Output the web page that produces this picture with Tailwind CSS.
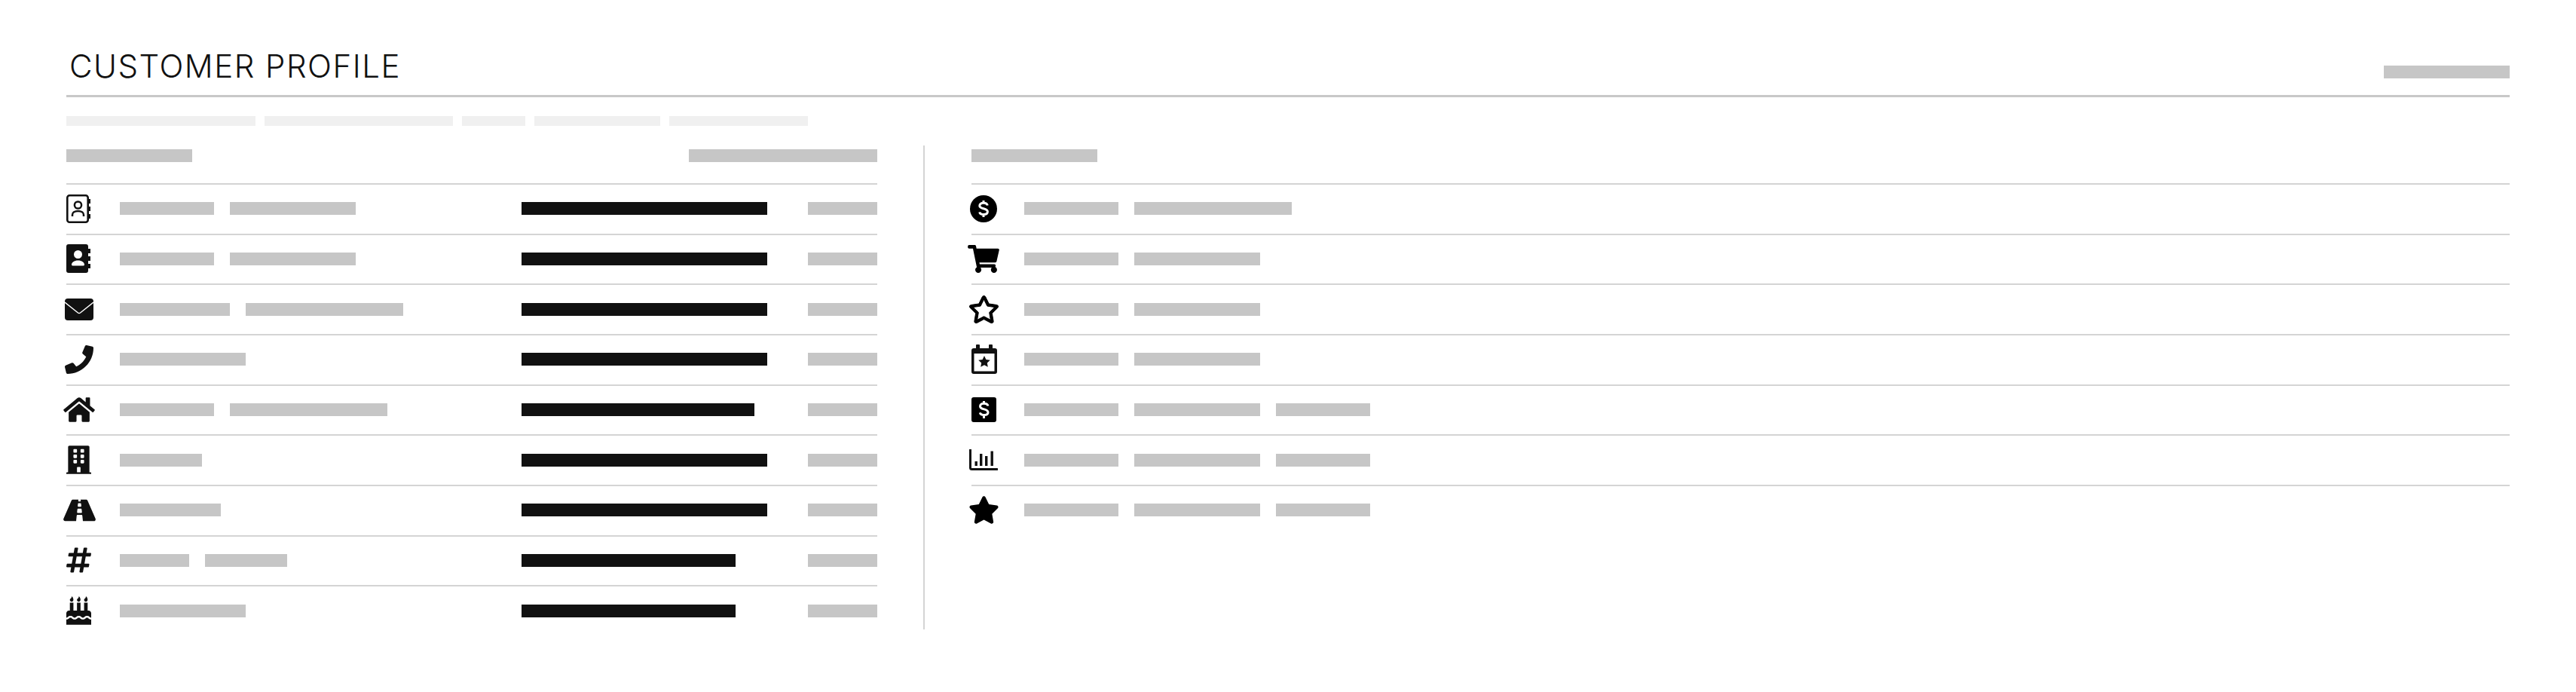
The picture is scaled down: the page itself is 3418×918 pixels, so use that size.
<!DOCTYPE html>
<html lang="en">
<head>
    <meta charset="UTF-8">
    <meta name="viewport" content="width=device-width, initial-scale=1.0">
    <title>Customer Profile</title>
    <script src="https://cdn.jsdelivr.net/npm/@tailwindcss/browser@4"></script>
</head>
<body class="bg-white">
    <div class="w-[3418px] h-[918px] px-[88px] font-['Inter',sans-serif] overflow-hidden">
        <!-- Header -->
        <div class="h-[129px] flex items-start justify-between border-b-[3px] border-[#c8c8c8]">
            <h1 class="ml-[4px] mt-[64px] text-[42px] leading-[48px] font-light text-[#111] tracking-[1.5px]">CUSTOMER PROFILE</h1>
            <div class="mt-[87px] w-[167px] h-[17px] bg-[#c6c6c6]"></div>
        </div>

        <!-- Tabs -->
        <div class="mt-[25px] flex gap-[12px]">
            <div class="w-[251px] h-[13px] bg-[#f0f0f0]"></div>
            <div class="w-[250px] h-[13px] bg-[#f0f0f0]"></div>
            <div class="w-[84px] h-[13px] bg-[#f0f0f0]"></div>
            <div class="w-[167px] h-[13px] bg-[#f0f0f0]"></div>
            <div class="w-[184px] h-[13px] bg-[#f0f0f0]"></div>
        </div>

        <div class="mt-[26px] flex">
            <!-- Left column -->
            <div class="w-[1076px]">
                <div class="h-[50px] pt-[5px] flex items-start justify-between">
                    <div class="w-[167px] h-[17px] bg-[#c6c6c6]"></div>
                    <div class="w-[250px] h-[17px] bg-[#c6c6c6]"></div>
                </div>
                <div class="h-[66.67px] pb-[1px] flex items-center border-t-2 border-[#d4d4d4]">
                    <div class="w-[71px] shrink-0">
                        <svg class="w-[33px] h-[38px]" viewBox="0 0 33 38"><rect x="1.300" y="1.300" width="27.400" height="35.400" rx="3" fill="none" stroke="#111" stroke-width="2.600"/><path d="M29 6h3v6h-3zM29 16h3v6h-3zM29 26h3v6h-3z" fill="#111"/><circle cx="15.500" cy="14" r="4.600" fill="none" stroke="#111" stroke-width="2.500"/><path d="M8 29v-2c0-3 3-5 7.500-5s7.500 2 7.500 5v2" fill="none" stroke="#111" stroke-width="2.500"/></svg>
                    </div>
                    <div class="w-[533px] flex gap-[21px]"><div class="w-[125px] h-[17px] bg-[#c6c6c6]"></div><div class="w-[167px] h-[17px] bg-[#c6c6c6]"></div></div>
                    <div class="w-[380px]"><div class="w-[326px] h-[17px] bg-[#111]"></div></div>
                    <div class="w-[92px] h-[17px] bg-[#c6c6c6]"></div>
                </div>
                <div class="h-[66.67px] pb-[1px] flex items-center border-t-2 border-[#d4d4d4]">
                    <div class="w-[71px] shrink-0">
                        <svg class="w-[33px] h-[38px]" viewBox="0 0 33 38"><path fill-rule="evenodd" d="M3 0h23a3 3 0 0 1 3 3v32a3 3 0 0 1-3 3H3a3 3 0 0 1-3-3V3a3 3 0 0 1 3-3zM15.500 8a5.500 5.500 0 1 0 0 11 5.500 5.500 0 0 0 0-11zM7 27c0 1.500 1 1.500 2 1.500h13c1 0 2 0 2-1.500 0-3-3.500-5.500-8.500-5.500S7 24 7 27z" fill="#111"/><path d="M29 6h3v6h-3zM29 16h3v6h-3zM29 26h3v6h-3z" fill="#111"/></svg>
                    </div>
                    <div class="w-[533px] flex gap-[21px]"><div class="w-[125px] h-[17px] bg-[#c6c6c6]"></div><div class="w-[167px] h-[17px] bg-[#c6c6c6]"></div></div>
                    <div class="w-[380px]"><div class="w-[326px] h-[17px] bg-[#111]"></div></div>
                    <div class="w-[92px] h-[17px] bg-[#c6c6c6]"></div>
                </div>
                <div class="h-[66.67px] pb-[1px] flex items-center border-t-2 border-[#d4d4d4]">
                    <div class="w-[71px] shrink-0 -ml-[2px] mr-[2px]">
                        <svg class="w-[38px] h-[29px]" viewBox="0 0 38 29"><rect width="38" height="29" rx="4" fill="#111"/><path d="M0 5l17.500 14q1.500 1 3 0L38 5" fill="none" stroke="#fff" stroke-width="1.500"/></svg>
                    </div>
                    <div class="w-[533px] flex gap-[21px]"><div class="w-[146px] h-[17px] bg-[#c6c6c6]"></div><div class="w-[209px] h-[17px] bg-[#c6c6c6]"></div></div>
                    <div class="w-[380px]"><div class="w-[326px] h-[17px] bg-[#111]"></div></div>
                    <div class="w-[92px] h-[17px] bg-[#c6c6c6]"></div>
                </div>
                <div class="h-[66.67px] pb-[1px] flex items-center border-t-2 border-[#d4d4d4]">
                    <div class="w-[71px] shrink-0 -ml-[2px] mr-[2px]">
                        <svg class="w-[38px] h-[38px]" viewBox="0 0 512 512"><path fill="#111" d="M493.4 24.6l-104-24c-11.3-2.6-22.9 3.3-27.500 13.900l-48 112c-4.200 9.800-1.400 21.300 6.900 28l60.600 49.600c-36 76.700-98.900 140.500-177.200 177.200l-49.600-60.600c-6.800-8.300-18.200-11.100-28-6.900l-112 48C3.900 366.500-2 378.100.6 389.400l24 104C27.100 504.200 36.700 512 48 512c256.100 0 464-207.500 464-464 0-11.200-7.700-20.900-18.600-23.400z"/></svg>
                    </div>
                    <div class="w-[533px] flex gap-[21px]"><div class="w-[167px] h-[17px] bg-[#c6c6c6]"></div></div>
                    <div class="w-[380px]"><div class="w-[326px] h-[17px] bg-[#111]"></div></div>
                    <div class="w-[92px] h-[17px] bg-[#c6c6c6]"></div>
                </div>
                <div class="h-[66.67px] pb-[1px] flex items-center border-t-2 border-[#d4d4d4]">
                    <div class="w-[71px] shrink-0 -ml-[4px] mr-[4px]">
                        <svg class="w-[42px] h-[37px]" viewBox="0 0 576 512"><path fill="#111" d="M280.37 148.26L96 300.11V464a16 16 0 0 0 16 16l112.060-.29a16 16 0 0 0 15.920-16V368a16 16 0 0 1 16-16h64a16 16 0 0 1 16 16v95.640a16 16 0 0 0 16 16.050L464 480a16 16 0 0 0 16-16V300L295.670 148.260a12.190 12.190 0 0 0-15.300 0zM571.600 251.470L488 182.560V44.050a12 12 0 0 0-12-12h-56a12 12 0 0 0-12 12v72.610L318.470 43a48 48 0 0 0-61 0L4.340 251.470a12 12 0 0 0-1.600 16.900l25.500 31A12 12 0 0 0 45.150 301l235.220-193.740a12.190 12.190 0 0 1 15.300 0L530.900 301a12 12 0 0 0 16.900-1.600l25.500-31a12 12 0 0 0-1.700-16.930z"/></svg>
                    </div>
                    <div class="w-[533px] flex gap-[21px]"><div class="w-[125px] h-[17px] bg-[#c6c6c6]"></div><div class="w-[209px] h-[17px] bg-[#c6c6c6]"></div></div>
                    <div class="w-[380px]"><div class="w-[309px] h-[17px] bg-[#111]"></div></div>
                    <div class="w-[92px] h-[17px] bg-[#c6c6c6]"></div>
                </div>
                <div class="h-[66.67px] pb-[1px] flex items-center border-t-2 border-[#d4d4d4]">
                    <div class="w-[71px] shrink-0">
                        <svg class="w-[33px] h-[38px]" viewBox="0 0 448 512"><path fill="#111" d="M436 480h-20V24c0-13.255-10.745-24-24-24H56C42.745 0 32 10.745 32 24v456H12c-6.627 0-12 5.373-12 12v20h448v-20c0-6.627-5.373-12-12-12zM128 76c0-6.627 5.373-12 12-12h40c6.627 0 12 5.373 12 12v40c0 6.627-5.373 12-12 12h-40c-6.627 0-12-5.373-12-12V76zm0 96c0-6.627 5.373-12 12-12h40c6.627 0 12 5.373 12 12v40c0 6.627-5.373 12-12 12h-40c-6.627 0-12-5.373-12-12v-40zm52 148h-40c-6.627 0-12-5.373-12-12v-40c0-6.627 5.373-12 12-12h40c6.627 0 12 5.373 12 12v40c0 6.627-5.373 12-12 12zm76 160h-64v-84c0-6.627 5.373-12 12-12h40c6.627 0 12 5.373 12 12v84zm64-172c0 6.627-5.373 12-12 12h-40c-6.627 0-12-5.373-12-12v-40c0-6.627 5.373-12 12-12h40c6.627 0 12 5.373 12 12v40zm0-96c0 6.627-5.373 12-12 12h-40c-6.627 0-12-5.373-12-12v-40c0-6.627 5.373-12 12-12h40c6.627 0 12 5.373 12 12v40zm0-96c0 6.627-5.373 12-12 12h-40c-6.627 0-12-5.373-12-12V76c0-6.627 5.373-12 12-12h40c6.627 0 12 5.373 12 12v40z"/></svg>
                    </div>
                    <div class="w-[533px] flex gap-[21px]"><div class="w-[109px] h-[17px] bg-[#c6c6c6]"></div></div>
                    <div class="w-[380px]"><div class="w-[326px] h-[17px] bg-[#111]"></div></div>
                    <div class="w-[92px] h-[17px] bg-[#c6c6c6]"></div>
                </div>
                <div class="h-[66.67px] pb-[1px] flex items-center border-t-2 border-[#d4d4d4]">
                    <div class="w-[71px] shrink-0 -ml-[4px] mr-[4px]">
                        <svg class="w-[43px] h-[38px]" viewBox="0 0 576 512"><path fill="#111" d="M573.19 402.67l-139.790-320C428.430 71.290 417.600 64 405.680 64h-97.590l2.450 23.160c.5 4.720-3.210 8.840-7.960 8.840h-29.160c-4.750 0-8.460-4.120-7.960-8.840L267.910 64h-97.590c-11.930 0-22.760 7.290-27.730 18.670L2.800 402.670C-6.450 423.860 8.310 448 30.540 448h196.840l10.310-97.680c.86-8.140 7.720-14.320 15.910-14.320h68.800c8.190 0 15.050 6.180 15.910 14.320L348.620 448h196.840c22.230 0 36.990-24.140 27.730-45.330zM260.400 135.160a8 8 0 0 1 7.960-7.160h39.290c4.090 0 7.530 3.090 7.960 7.160l4.600 43.580c.75 7.090-4.810 13.260-11.930 13.260h-40.540c-7.130 0-12.680-6.170-11.930-13.260l4.600-43.580zM315.640 304h-55.290c-9.500 0-16.910-8.230-15.910-17.680l5.070-48c.86-8.140 7.720-14.320 15.910-14.320h45.150c8.190 0 15.050 6.180 15.910 14.320l5.070 48c1 9.450-6.410 17.680-15.910 17.680z"/></svg>
                    </div>
                    <div class="w-[533px] flex gap-[21px]"><div class="w-[134px] h-[17px] bg-[#c6c6c6]"></div></div>
                    <div class="w-[380px]"><div class="w-[326px] h-[17px] bg-[#111]"></div></div>
                    <div class="w-[92px] h-[17px] bg-[#c6c6c6]"></div>
                </div>
                <div class="h-[66.67px] pb-[1px] flex items-center border-t-2 border-[#d4d4d4]">
                    <div class="w-[71px] shrink-0">
                        <svg class="w-[33px] h-[38px]" viewBox="0 0 448 512"><path fill="#111" d="M440.667 182.109l7.143-40c1.313-7.355-4.342-14.109-11.813-14.109h-74.810l14.623-81.891C377.123 38.754 371.468 32 363.997 32h-40.632a12 12 0 0 0-11.813 9.891L296.175 128H197.540l14.623-81.891C213.477 38.754 207.822 32 200.350 32h-40.632a12 12 0 0 0-11.813 9.891L132.528 128H53.432a12 12 0 0 0-11.813 9.891l-7.143 40C33.163 185.246 38.818 192 46.289 192h74.810L98.242 320H19.146a12 12 0 0 0-11.813 9.891l-7.143 40C-1.123 377.246 4.532 384 12.003 384h74.810L72.190 465.891C70.877 473.246 76.532 480 84.003 480h40.632a12 12 0 0 0 11.813-9.891L151.826 384h98.634l-14.623 81.891C234.523 473.246 240.178 480 247.650 480h40.632a12 12 0 0 0 11.813-9.891L315.472 384h79.096a12 12 0 0 0 11.813-9.891l7.143-40c1.313-7.355-4.342-14.109-11.813-14.109h-74.810l22.857-128h79.096a12 12 0 0 0 11.813-9.891zM261.889 320h-98.634l22.857-128h98.634l-22.857 128z"/></svg>
                    </div>
                    <div class="w-[533px] flex gap-[21px]"><div class="w-[92px] h-[17px] bg-[#c6c6c6]"></div><div class="w-[109px] h-[17px] bg-[#c6c6c6]"></div></div>
                    <div class="w-[380px]"><div class="w-[284px] h-[17px] bg-[#111]"></div></div>
                    <div class="w-[92px] h-[17px] bg-[#c6c6c6]"></div>
                </div>
                <div class="h-[66.67px] pb-[1px] flex items-center border-t-2 border-[#d4d4d4]">
                    <div class="w-[71px] shrink-0">
                        <svg class="w-[33px] h-[38px]" viewBox="0 0 448 512"><path fill="#111" d="M448 384c-28.020 0-31.260-32-74.500-32-43.430 0-46.825 32-74.750 32-27.695 0-31.454-32-74.750-32-42.842 0-47.218 32-74.500 32-28.148 0-31.202-32-74.750-32-43.547 0-46.653 32-74.750 32v-80c0-26.500 21.500-48 48-48h16V112h64v144h64V112h64v144h64V112h64v144h16c26.500 0 48 21.500 48 48v80zm0 128H0v-96c43.356 0 46.767-32 74.750-32 27.951 0 31.253 32 74.750 32 42.843 0 47.217-32 74.500-32 28.148 0 31.201 32 74.750 32 43.357 0 46.767-32 74.750-32 27.488 0 31.252 32 74.500 32v96zM96 96c-17.750 0-32-14.250-32-32 0-31 32-23 32-64 12 0 32 29.500 32 56s-14.250 40-32 40zm128 0c-17.750 0-32-14.250-32-32 0-31 32-23 32-64 12 0 32 29.500 32 56s-14.250 40-32 40zm128 0c-17.750 0-32-14.250-32-32 0-31 32-23 32-64 12 0 32 29.500 32 56s-14.250 40-32 40z"/></svg>
                    </div>
                    <div class="w-[533px] flex gap-[21px]"><div class="w-[167px] h-[17px] bg-[#c6c6c6]"></div></div>
                    <div class="w-[380px]"><div class="w-[284px] h-[17px] bg-[#111]"></div></div>
                    <div class="w-[92px] h-[17px] bg-[#c6c6c6]"></div>
                </div>
            </div>

            <!-- Divider -->
            <div class="ml-[61px] mr-[62px] w-[2px] h-[642px] bg-[#d4d4d4]"></div>

            <!-- Right column -->
            <div class="flex-1">
                <div class="h-[50px] pt-[5px]"><div class="w-[167px] h-[17px] bg-[#c6c6c6]"></div></div>
                <div class="h-[66.67px] pb-[1px] flex items-center gap-[21px] border-t-2 border-[#d4d4d4]">
                    <div class="w-[49px] -ml-[2px] mr-[2px] shrink-0">
                        <svg class="w-[36px] h-[36px]" viewBox="0 0 36 36"><circle cx="18" cy="18" r="18" fill="#000"/><path d="M23.300 13.500c-.5-2-2.500-3.200-5.300-3.200-3.200 0-5.200 1.500-5.200 3.700 0 4.800 10.600 2.800 10.600 7.800 0 2.200-2 3.700-5.400 3.700-2.800 0-4.800-1.200-5.300-3.200M18 7v3.500M18 25.500V29" fill="none" stroke="#fff" stroke-width="3"/></svg>
                    </div>
                    <div class="w-[125px] h-[17px] bg-[#c6c6c6]"></div><div class="w-[209px] h-[17px] bg-[#c6c6c6]"></div>
                </div>
                <div class="h-[66.67px] pb-[1px] flex items-center gap-[21px] border-t-2 border-[#d4d4d4]">
                    <div class="w-[49px] -ml-[5px] mr-[5px] shrink-0">
                        <svg class="w-[42px] h-[37px]" viewBox="0 0 576 512"><path fill="#000" d="M528.120 301.319l47.273-208C578.806 78.301 567.391 64 551.990 64H159.208l-9.166-44.810C147.758 8.021 137.930 0 126.529 0H24C10.745 0 0 10.745 0 24v16c0 13.255 10.745 24 24 24h69.883l70.248 343.435C147.325 417.100 136 435.222 136 456c0 30.928 25.072 56 56 56s56-25.072 56-56c0-15.674-6.447-29.835-16.824-40h209.647C430.447 426.165 424 440.326 424 456c0 30.928 25.072 56 56 56s56-25.072 56-56c0-22.172-12.888-41.332-31.579-50.405l5.517-24.276c3.413-15.018-8.002-29.319-23.403-29.319H218.117l-6.545-32h293.145c11.206 0 20.920-7.754 23.403-18.681z"/></svg>
                    </div>
                    <div class="w-[125px] h-[17px] bg-[#c6c6c6]"></div><div class="w-[167px] h-[17px] bg-[#c6c6c6]"></div>
                </div>
                <div class="h-[66.67px] pb-[1px] flex items-center gap-[21px] border-t-2 border-[#d4d4d4]">
                    <div class="w-[49px] -ml-[4px] mr-[4px] shrink-0">
                        <svg class="w-[41px] h-[37px]" viewBox="0 0 576 512"><path fill="#000" stroke="#000" stroke-width="14" d="M528.100 171.500L382 150.200 316.700 17.800c-11.700-23.600-45.600-23.900-57.400 0L194 150.200 47.900 171.500c-26.200 3.800-36.700 36.100-17.700 54.600l105.700 103-25 145.500c-4.500 26.300 23.200 46 46.400 33.700L288 439.600l130.700 68.700c23.200 12.200 50.900-7.400 46.400-33.700l-25-145.500 105.700-103c19-18.500 8.500-50.800-17.700-54.600zM388.600 312.300l23.700 138.400L288 385.400l-124.300 65.300 23.700-138.400-100.600-98 139-20.200 62.200-126 62.200 126 139 20.200-100.600 98z"/></svg>
                    </div>
                    <div class="w-[125px] h-[17px] bg-[#c6c6c6]"></div><div class="w-[167px] h-[17px] bg-[#c6c6c6]"></div>
                </div>
                <div class="h-[66.67px] pb-[1px] flex items-center gap-[21px] border-t-2 border-[#d4d4d4]">
                    <div class="w-[49px] shrink-0">
                        <svg class="w-[34px] h-[39px]" viewBox="0 0 34 39"><path fill="#111" fill-rule="evenodd" d="M7 0h3a1 1 0 0 1 1 1v4h12V1a1 1 0 0 1 1-1h3a1 1 0 0 1 1 1v4h3a3 3 0 0 1 3 3v28a3 3 0 0 1-3 3H3a3 3 0 0 1-3-3V8a3 3 0 0 1 3-3h3V1a1 1 0 0 1 1-1zM3.500 12v23.500h27V12z"/><path fill="#111" d="M17 15l2.400 5 5.400.7-4 3.700 1 5.400L17 27.200l-4.800 2.600 1-5.400-4-3.700 5.400-.7z"/></svg>
                    </div>
                    <div class="w-[125px] h-[17px] bg-[#c6c6c6]"></div><div class="w-[167px] h-[17px] bg-[#c6c6c6]"></div>
                </div>
                <div class="h-[66.67px] pb-[1px] flex items-center gap-[21px] border-t-2 border-[#d4d4d4]">
                    <div class="w-[49px] shrink-0">
                        <svg class="w-[33px] h-[33px]" viewBox="0 0 33 33"><rect width="33" height="33" rx="3" fill="#000"/><path d="M22 11.500c-.5-2-2.500-3.200-5.500-3.200-3 0-5 1.500-5 3.600 0 5 10.500 2.900 10.500 8 0 2.100-2 3.600-5.200 3.600-3 0-5-1.200-5.500-3.200M16.500 5v3.500M16.500 24.500V28" fill="none" stroke="#fff" stroke-width="3"/></svg>
                    </div>
                    <div class="w-[125px] h-[17px] bg-[#c6c6c6]"></div><div class="w-[167px] h-[17px] bg-[#c6c6c6]"></div><div class="w-[125px] h-[17px] bg-[#c6c6c6]"></div>
                </div>
                <div class="h-[66.67px] pb-[1px] flex items-center gap-[21px] border-t-2 border-[#d4d4d4]">
                    <div class="w-[49px] -ml-[3px] mr-[3px] shrink-0">
                        <svg class="w-[38px] h-[28px]" viewBox="0 0 38 28"><path d="M1.500 0v24.500c0 1 .8 2 2 2H37" fill="none" stroke="#111" stroke-width="3" stroke-linecap="round"/><path fill="#111" d="M7.500 16h3.400v6H7.500zM14 6h3.400v16H14zM21 9h3.400v13H21zM28.500 2.500h3.400V22h-3.400z"/></svg>
                    </div>
                    <div class="w-[125px] h-[17px] bg-[#c6c6c6]"></div><div class="w-[167px] h-[17px] bg-[#c6c6c6]"></div><div class="w-[125px] h-[17px] bg-[#c6c6c6]"></div>
                </div>
                <div class="h-[66.67px] pb-[1px] flex items-center gap-[21px] border-t-2 border-[#d4d4d4]">
                    <div class="w-[49px] -ml-[4px] mr-[4px] shrink-0">
                        <svg class="w-[41px] h-[37px]" viewBox="0 0 576 512"><path fill="#000" d="M259.300 17.800L194 150.200 47.900 171.500c-26.200 3.800-36.700 36.100-17.700 54.600l105.700 103-25 145.500c-4.500 26.300 23.200 46 46.400 33.700L288 439.600l130.700 68.700c23.200 12.200 50.900-7.400 46.400-33.700l-25-145.500 105.700-103c19-18.500 8.500-50.800-17.700-54.600L382 150.200 316.700 17.800c-11.700-23.600-45.600-23.900-57.400 0z"/></svg>
                    </div>
                    <div class="w-[125px] h-[17px] bg-[#c6c6c6]"></div><div class="w-[167px] h-[17px] bg-[#c6c6c6]"></div><div class="w-[125px] h-[17px] bg-[#c6c6c6]"></div>
                </div>
            </div>
        </div>
    </div>
</body>
</html>
